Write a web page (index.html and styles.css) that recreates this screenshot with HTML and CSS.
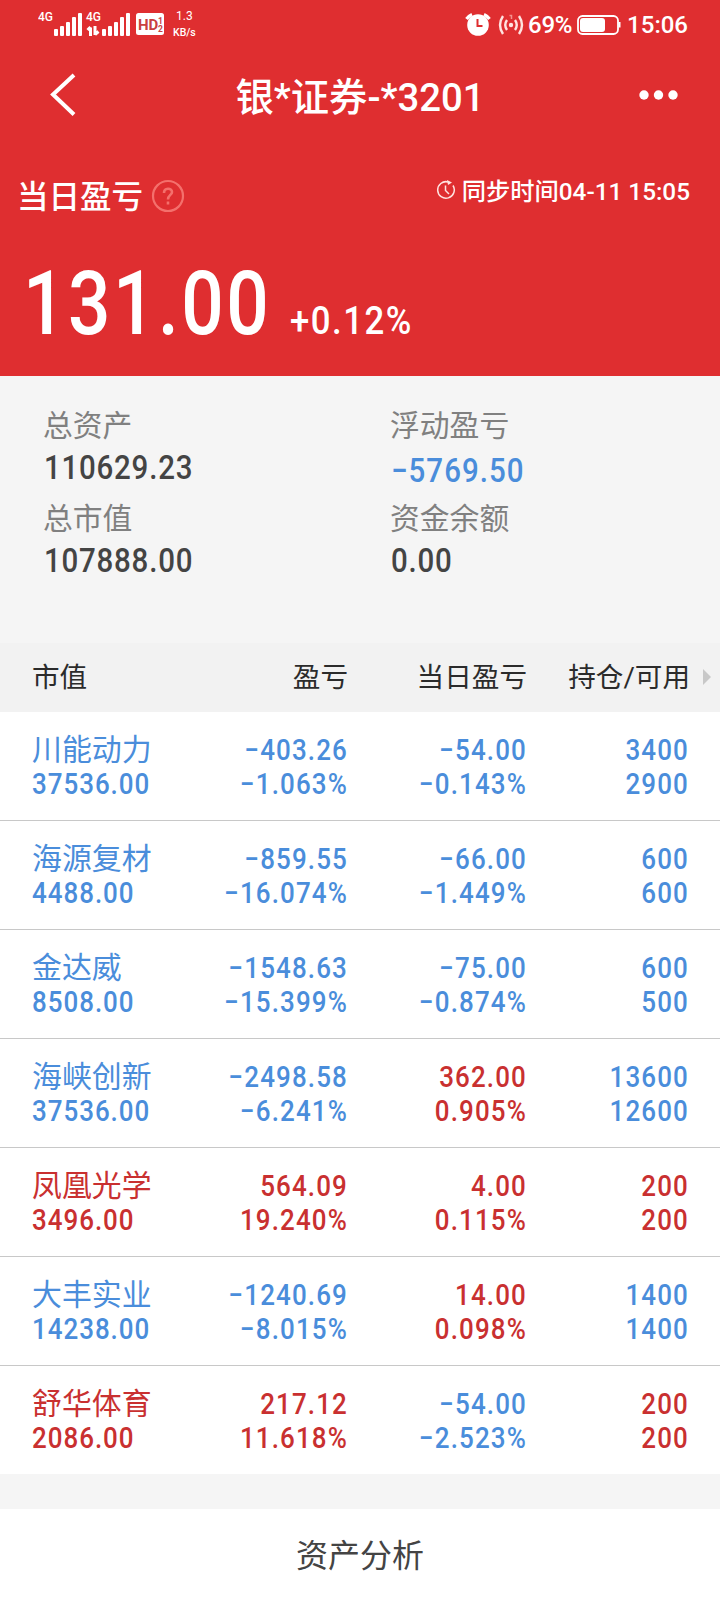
FILE: index.html
```html
<!DOCTYPE html>
<html lang="zh-CN">
<head>
    <meta charset="UTF-8">
    <meta name="viewport" content="width=device-width, initial-scale=1.0">
    <title>银*证券-*3201</title>
    <link rel="stylesheet" href="styles.css">
</head>
<body>
    <header class="header">
        <div class="status-bar">
            <div class="status-left">
                <svg class="signals" width="128" height="36" viewBox="0 0 128 36" fill="#fff">
                    <text x="0" y="21" class="net">4G</text>
                    <rect x="16" y="29" width="4" height="7" rx="1"/>
                    <rect x="22" y="26" width="4" height="10" rx="1"/>
                    <rect x="28" y="22" width="4" height="14" rx="1"/>
                    <rect x="34" y="17" width="4" height="19" rx="1"/>
                    <rect x="40" y="13" width="4" height="23" rx="1"/>
                    <text x="48" y="21" class="net">4G</text>
                    <path d="M52.500 36V27.500M49.500 30L52.500 27M57 26V35M57 34.500L60.500 31.500" fill="none" stroke="#fff" stroke-width="3"/>
                    <rect x="64" y="29" width="4" height="7" rx="1"/>
                    <rect x="70" y="26" width="4" height="10" rx="1"/>
                    <rect x="76" y="22" width="4" height="14" rx="1"/>
                    <rect x="82" y="17" width="4" height="19" rx="1"/>
                    <rect x="88" y="13" width="4" height="23" rx="1"/>
                    <rect x="98" y="13" width="28" height="22" rx="2.500"/>
                    <text x="100" y="30" class="hd">HD</text>
                    <text x="120" y="24" class="hd-sub">1</text>
                    <text x="120" y="32" class="hd-sub">2</text>
                </svg>
                <div class="speed"><span>1.3</span><span>KB/s</span></div>
            </div>
            <div class="status-right">
                <svg class="alarm" width="26" height="26" viewBox="0 0 26 26">
                    <path d="M1.500 7A13 13 0 0 1 7 2.500M19 2.500A13 13 0 0 1 24.500 7" fill="none" stroke="#fff" stroke-width="3.200"/>
                    <circle cx="13" cy="13" r="10.800" fill="#fff"/>
                    <path d="M12.500 7V14H17.500" fill="none" stroke="#df2e30" stroke-width="2"/>
                </svg>
                <svg class="hotspot" width="26" height="22" viewBox="0 0 26 22" fill="none" stroke="#ffe3e0" stroke-width="2.400">
                    <circle cx="13" cy="11" r="2.200" fill="#ffe3e0" stroke="none"/>
                    <path d="M9 6Q5.500 11 9 16M17 6Q20.500 11 17 16M5 2Q-1 11 5 20M21 2Q27 11 21 20"/>
                    <path d="M11.500 1.500H13.500V5" stroke="#f4918d" stroke-width="1.500"/>
                </svg>
                <span class="battery-text">69%</span>
                <svg class="battery" width="44" height="20" viewBox="0 0 44 20">
                    <rect x="1" y="1" width="40" height="18" rx="4.500" fill="none" stroke="#fff" stroke-width="1.800"/>
                    <rect x="3" y="3" width="25" height="14" rx="3" fill="#fff"/>
                    <path d="M41.500 7H43.500V12.500H41.500Z" fill="#fff"/>
                </svg>
                <span class="clock">15:06</span>
            </div>
        </div>
        <nav class="nav">
            <svg width="26" height="44" viewBox="0 0 26 44" fill="none" stroke="#fff" stroke-width="4"><path d="M24 2L3 21.500L24 41.500"/></svg>
            <h1>银*证券-*3201</h1>
            <svg width="40" height="12" viewBox="0 0 40 12" fill="#fff"><circle cx="5" cy="6" r="4.700"/><circle cx="19.500" cy="6" r="4.700"/><circle cx="34" cy="6" r="4.700"/></svg>
        </nav>
        <div class="today">
            <span class="today-label">当日盈亏</span>
            <svg width="34" height="34" viewBox="0 0 34 34" fill="none" stroke="#f4706c" stroke-width="2.200">
                <circle cx="17" cy="17" r="15"/>
                <path d="M13 14C13 8.500 21 8.500 21 13C21 16 17 16 17 20.500M17 22.500V25.500" stroke-width="2.600"/>
            </svg>
            <span class="sync">
                <svg width="20" height="20" viewBox="0 0 20 20" fill="none" stroke="#ffe3e0" stroke-width="1.500"><path d="M17 5.500A8.300 8.300 0 1 1 12 1.900M9.500 5.500V10.500L13 14"/><path d="M11 0L16 2.500L12 5Z" fill="#ffe3e0" stroke="none"/></svg>
                <span>同步时间04-11 15:05</span>
            </span>
        </div>
        <div class="profit">
            <span class="amount">131.00</span>
            <span class="rate">+0.12%</span>
        </div>
    </header>

    <section class="summary">
        <div class="item"><span class="label">总资产</span><span class="value">110629.23</span></div>
        <div class="item"><span class="label">浮动盈亏</span><span class="value float">−5769.50</span></div>
        <div class="item"><span class="label">总市值</span><span class="value">107888.00</span></div>
        <div class="item"><span class="label">资金余额</span><span class="value">0.00</span></div>
    </section>

    <div class="row table-head">
        <span>市值</span><span>盈亏</span><span>当日盈亏</span><span>持仓/可用</span>
        <i class="arrow"></i>
    </div>
    <main class="list">
        <div class="row down">
            <div class="stock"><b>川能动力</b><span class="num">37536.00</span></div>
            <div class="num">−403.26<br>−1.063%</div>
            <div class="num">−54.00<br>−0.143%</div>
            <div class="num">3400<br>2900</div>
        </div>
        <div class="row down">
            <div class="stock"><b>海源复材</b><span class="num">4488.00</span></div>
            <div class="num">−859.55<br>−16.074%</div>
            <div class="num">−66.00<br>−1.449%</div>
            <div class="num">600<br>600</div>
        </div>
        <div class="row down">
            <div class="stock"><b>金达威</b><span class="num">8508.00</span></div>
            <div class="num">−1548.63<br>−15.399%</div>
            <div class="num">−75.00<br>−0.874%</div>
            <div class="num">600<br>500</div>
        </div>
        <div class="row down">
            <div class="stock"><b>海峡创新</b><span class="num">37536.00</span></div>
            <div class="num">−2498.58<br>−6.241%</div>
            <div class="num up">362.00<br>0.905%</div>
            <div class="num">13600<br>12600</div>
        </div>
        <div class="row up">
            <div class="stock"><b>凤凰光学</b><span class="num">3496.00</span></div>
            <div class="num">564.09<br>19.240%</div>
            <div class="num">4.00<br>0.115%</div>
            <div class="num">200<br>200</div>
        </div>
        <div class="row down">
            <div class="stock"><b>大丰实业</b><span class="num">14238.00</span></div>
            <div class="num">−1240.69<br>−8.015%</div>
            <div class="num up">14.00<br>0.098%</div>
            <div class="num">1400<br>1400</div>
        </div>
        <div class="row up">
            <div class="stock"><b>舒华体育</b><span class="num">2086.00</span></div>
            <div class="num">217.12<br>11.618%</div>
            <div class="num down">−54.00<br>−2.523%</div>
            <div class="num">200<br>200</div>
        </div>
    </main>

    <footer class="analysis">资产分析</footer>
</body>
</html>
```
FILE: styles.css
```css
* {
    box-sizing: border-box;
}
body {
    margin: 0;
    background: #f5f5f5;
    font-family: Roboto, "Noto Sans CJK SC", sans-serif;
    color: #444;
}
svg {
    display: block;
    flex: none;
}

/* header */
.header {
    height: 376px;
    background: #df2e30;
    color: #fff;
}
.status-bar {
    display: flex;
    justify-content: space-between;
    height: 50px;
    padding: 0 32px 0 38px;
}
.status-left,
.status-right {
    display: flex;
    align-items: flex-start;
}
.net {
    font-size: 12px;
    font-weight: 500;
}
.hd {
    font-size: 15px;
    font-weight: 700;
    fill: #c9403f;
}
.hd-sub {
    font-size: 8.500px;
    font-weight: 700;
    fill: #c9403f;
}
.speed {
    display: flex;
    flex-direction: column;
    align-items: center;
    padding: 9px 0 0 7px;
    font-size: 12px;
    line-height: 15.500px;
}
.speed span:last-child {
    font-size: 10.500px;
    font-weight: 500;
}
.status-right {
    align-items: center;
    font-size: 24px;
    font-weight: 500;
    line-height: 50px;
}
.hotspot {
    margin: 0 4px 0 7px;
}
.battery-text {
    letter-spacing: -0.300px;
}
.battery {
    margin: 0 6px 0 5px;
}
.nav {
    display: flex;
    align-items: center;
    justify-content: space-between;
    height: 90px;
    padding: 0 41px 0 50px;
}
.nav h1 {
    margin: 6px 0 0 5px;
    font-size: 38.300px;
    font-weight: 500;
    line-height: 48px;
}
.today {
    display: flex;
    align-items: center;
    height: 42px;
    margin-top: 35px;
    padding: 0 30px 0 17px;
}
.today-label {
    margin-right: 8px;
    padding-top: 3px;
    font-size: 31.500px;
    font-weight: 500;
    line-height: 42px;
}
.sync {
    display: flex;
    align-items: center;
    gap: 6px;
    margin: -9px 0 0 auto;
    font-size: 24.300px;
    font-weight: 500;
    line-height: 30px;
}
.sync svg {
    margin-top: -3px;
}
.profit {
    display: flex;
    align-items: baseline;
    padding: 37px 0 0 23px;
    font-weight: 500;
    line-height: 100px;
}
.amount {
    font-size: 89px;
    letter-spacing: 3px;
    transform: scaleX(0.84);
    transform-origin: left;
}
.rate {
    margin-left: -29px;
    font-size: 39.500px;
    letter-spacing: 1.700px;
    transform: scaleX(0.88);
    transform-origin: left;
}

/* summary */
.summary {
    display: grid;
    grid-template-columns: 347px 1fr;
    grid-template-rows: 93px 93px;
    height: 267px;
    padding: 29px 0 0 43px;
}
.item {
    display: flex;
    flex-direction: column;
}
.label {
    color: #808080;
    font-size: 29.800px;
    line-height: 42px;
}
.value {
    padding-left: 1px;
    font-size: 33.500px;
    font-weight: 500;
    line-height: 42px;
    letter-spacing: 0.900px;
    transform: scaleX(0.88);
    transform-origin: left;
}
.float {
    padding-top: 3px;
    color: #4a8ddb;
    letter-spacing: 1.200px;
}

/* holdings */
.row {
    display: grid;
    grid-template-columns: 165px 151px 179px 162px;
    height: 109px;
    padding: 21px 0 0 32px;
    border-bottom: 1px solid #c8c8c8;
    line-height: 34px;
    text-align: right;
}
.row:last-child {
    border-bottom: none;
}
.num {
    font-size: 29.500px;
    font-weight: 500;
    letter-spacing: 1.300px;
    transform: scaleX(0.88);
    transform-origin: right;
}
.stock {
    display: flex;
    flex-direction: column;
    text-align: left;
}
.stock b {
    font-size: 29.900px;
    font-weight: 400;
}
.stock .num {
    letter-spacing: 1.100px;
    transform-origin: left;
}
.list {
    height: 762px;
    background: #fff;
}
.table-head {
    grid-template-columns: 165px 151px 179px 163px auto;
    align-items: center;
    height: 69px;
    padding-top: 0;
    border: none;
    background: #f2f2f2;
    color: #2b2b2b;
    font-size: 27.600px;
}
.table-head :first-child {
    text-align: left;
}
.arrow {
    margin: -2px 0 0 13px;
    width: 0;
    border: 8.500px solid transparent;
    border-left-color: #c8c8c8;
    border-right: none;
}
.down {
    color: #4a8ddb;
}
.up {
    color: #c93030;
}

.analysis {
    height: 91px;
    margin-top: 35px;
    background: #fff;
    font-size: 32px;
    line-height: 94px;
    text-align: center;
}
```
